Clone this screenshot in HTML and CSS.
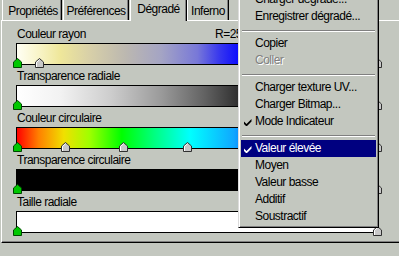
FILE: index.html
```html
<!DOCTYPE html>
<html lang="fr">
<head>
<meta charset="utf-8">
<link rel="stylesheet" href="styles.css">
</head>
<body>
<div class="win">
  <div class="tabs">
    <div class="tab t1">Propriétés</div>
    <div class="tab t2">Préférences</div>
    <div class="tab t3 active">Dégradé</div>
    <div class="tab t4">Inferno</div>
  </div>
  <div class="panel">
    <section class="grad">
      <div class="label"><span class="name">Couleur rayon</span><span class="val">R=255</span></div>
      <div class="bar b1">
        <svg class="mk" style="left:-4px" viewBox="0 0 9 10"><path class="g" d="M0.5 9.5V4L4.5 0.5L8.5 4V9.5Z"/></svg>
        <svg class="mk" style="left:18px" viewBox="0 0 9 10"><path class="s" d="M0.5 9.5V4L4.5 0.5L8.5 4V9.5Z"/><path class="h" d="M1.5 9V4.4L4.5 1.8"/></svg>
        <svg class="mk" style="left:356px" viewBox="0 0 9 10"><path class="s" d="M0.5 9.5V4L4.5 0.5L8.5 4V9.5Z"/><path class="h" d="M1.5 9V4.4L4.5 1.8"/></svg>
      </div>
    </section>
    <section class="grad">
      <div class="label"><span class="name">Transparence radiale</span></div>
      <div class="bar b2">
        <svg class="mk" style="left:-4px" viewBox="0 0 9 10"><path class="g" d="M0.5 9.5V4L4.5 0.5L8.5 4V9.5Z"/></svg>
        <svg class="mk" style="left:356px" viewBox="0 0 9 10"><path class="s" d="M0.5 9.5V4L4.5 0.5L8.5 4V9.5Z"/><path class="h" d="M1.5 9V4.4L4.5 1.8"/></svg>
      </div>
    </section>
    <section class="grad">
      <div class="label"><span class="name">Couleur circulaire</span></div>
      <div class="bar b3">
        <svg class="mk" style="left:-4px" viewBox="0 0 9 10"><path class="g" d="M0.5 9.5V4L4.5 0.5L8.5 4V9.5Z"/></svg>
        <svg class="mk" style="left:44px" viewBox="0 0 9 10"><path class="s" d="M0.5 9.5V4L4.5 0.5L8.5 4V9.5Z"/><path class="h" d="M1.5 9V4.4L4.5 1.8"/></svg>
        <svg class="mk" style="left:102px" viewBox="0 0 9 10"><path class="s" d="M0.5 9.5V4L4.5 0.5L8.5 4V9.5Z"/><path class="h" d="M1.5 9V4.4L4.5 1.8"/></svg>
        <svg class="mk" style="left:166px" viewBox="0 0 9 10"><path class="s" d="M0.5 9.5V4L4.5 0.5L8.5 4V9.5Z"/><path class="h" d="M1.5 9V4.4L4.5 1.8"/></svg>
        <svg class="mk" style="left:356px" viewBox="0 0 9 10"><path class="s" d="M0.5 9.5V4L4.5 0.5L8.5 4V9.5Z"/><path class="h" d="M1.5 9V4.4L4.5 1.8"/></svg>
      </div>
    </section>
    <section class="grad">
      <div class="label"><span class="name">Transparence circulaire</span></div>
      <div class="bar b4">
        <svg class="mk" style="left:-4px" viewBox="0 0 9 10"><path class="g" d="M0.5 9.5V4L4.5 0.5L8.5 4V9.5Z"/></svg>
        <svg class="mk" style="left:356px" viewBox="0 0 9 10"><path class="s" d="M0.5 9.5V4L4.5 0.5L8.5 4V9.5Z"/><path class="h" d="M1.5 9V4.4L4.5 1.8"/></svg>
      </div>
    </section>
    <section class="grad">
      <div class="label"><span class="name">Taille radiale</span></div>
      <div class="bar b5">
        <svg class="mk" style="left:-4px" viewBox="0 0 9 10"><path class="g" d="M0.5 9.5V4L4.5 0.5L8.5 4V9.5Z"/></svg>
        <svg class="mk" style="left:356px" viewBox="0 0 9 10"><path class="s" d="M0.5 9.5V4L4.5 0.5L8.5 4V9.5Z"/><path class="h" d="M1.5 9V4.4L4.5 1.8"/></svg>
      </div>
    </section>
  </div>

  <div class="menu">
    <div class="mi">Charger dégradé...</div>
    <div class="mi">Enregistrer dégradé...</div>
    <div class="sep"></div>
    <div class="mi">Copier</div>
    <div class="mi dis">Coller</div>
    <div class="sep"></div>
    <div class="mi">Charger texture UV...</div>
    <div class="mi">Charger Bitmap...</div>
    <div class="mi chk"><svg class="ck" viewBox="0 0 8 8"><path d="M0 3.5L2.5 6L7.5 1V3.5L2.5 8.5L0 6Z"/></svg>Mode Indicateur</div>
    <div class="sep"></div>
    <div class="mi chk sel"><svg class="ck" viewBox="0 0 8 8"><path d="M0 3.5L2.5 6L7.5 1V3.5L2.5 8.5L0 6Z"/></svg>Valeur élevée</div>
    <div class="mi">Moyen</div>
    <div class="mi">Valeur basse</div>
    <div class="mi">Additif</div>
    <div class="mi">Soustractif</div>
  </div>
</div>
</body>
</html>
```

FILE: styles.css
```css
html, body {
  margin: 0;
  padding: 0;
  background: #c3c7bf;
  overflow: hidden;
}
body {
  width: 399px;
  height: 256px;
  font-family: "Liberation Sans", Arial, sans-serif;
  font-size: 12px;
  letter-spacing: -0.5px;
  color: #000;
}
.win {
  position: relative;
  width: 399px;
  height: 256px;
}

/* tabs */
.tabs {
  display: flex;
  align-items: flex-end;
  height: 20px;
  padding-left: 2px;
}
.tab {
  box-sizing: border-box;
  height: 22px;
  border: 1px solid;
  border-color: #fff #000 transparent #fff;
  border-bottom: none;
  border-radius: 2px 2px 0 0;
  box-shadow: inset -1px 0 #808080;
  padding-top: 5px;
  line-height: 14px;
  text-align: center;
  white-space: nowrap;
  background: #c3c7bf;
}
.t1 { width: 60px; padding-left: 2px; }
.t2 { width: 66px; margin-left: 1px; }
.t3 { width: 57px; margin-left: 1px; }
.t4 { width: 42px; }
.tab.active {
  height: 25px;
  margin-bottom: -1px;
  position: relative;
  z-index: 1;
}

/* panel */
.panel {
  width: 420px;
  margin-left: 1px;
  border-top: 1px solid #fff;
  border-left: 1px solid #fff;
  border-bottom: 1px solid #000;
  box-shadow: inset 0 -1px #808080;
  padding: 6px 0 9px 14px;
}
.grad + .grad { margin-top: 4px; }
.label {
  display: flex;
  line-height: 14px;
  margin-bottom: 2px;
  padding-left: 1px;
  white-space: nowrap;
}
.label .name { width: 198px; }
.bar {
  position: relative;
  box-sizing: border-box;
  width: 363px;
  height: 22px;
  border: 1px solid #000;
}
.b1 {
  background: linear-gradient(to right,
    #fffff4 0%, #f8f4c8 6%, #efe79a 12%, #d8d0a8 20%,
    #bcb8b0 30%, #a4a4c4 40%, #7878d8 50%, #3838ee 56%,
    #0808ff 62%, #0000ff 100%);
}
.b2 {
  background: linear-gradient(to right,
    #ffffff 0%, #f2f2f2 12%, #cdcdcd 26%, #9a9a9a 40%,
    #626262 52%, #2c2c2c 62%, #101010 75%, #000 100%);
}
.b3 {
  background: linear-gradient(to right,
    #ff0000 0%, #ff8000 6%, #f0e000 13%, #a0ff00 20%,
    #00ff00 29%, #00ff80 38%, #00ffff 48%, #10a8ff 60%,
    #0000ff 72%, #ff00ff 86%, #ff0000 100%);
}
.b4 { background: #000; }
.b5 { background: #fff; }

.mk {
  position: absolute;
  top: 14px;
  width: 9px;
  height: 10px;
}
.mk .g { fill: #00c800; stroke: #004800; stroke-width: 1; }
.mk .s { fill: #c8c8c8; stroke: #303030; stroke-width: 1; }
.mk .h { fill: none; stroke: #fff; stroke-width: 1; }

/* popup menu */
.menu {
  position: absolute;
  z-index: 5;
  left: 238px;
  top: -13px;
  width: 141px;
  box-sizing: border-box;
  background: #c3c7bf;
  border: 1px solid;
  border-color: #dcdcdc #000 #000 #dcdcdc;
  box-shadow: inset 1px 1px #fff, inset -1px -1px #808080;
  padding: 3px 2px 2px 2px;
}
.mi {
  display: flex;
  align-items: center;
  height: 17px;
  line-height: 17px;
  padding-left: 14px;
  white-space: nowrap;
}
.mi.chk { padding-left: 3px; }
.ck {
  width: 8px;
  height: 8px;
  margin-right: 3px;
  margin-top: 1px;
  fill: #000;
}
.mi.sel {
  background: #000080;
  color: #fff;
}
.mi.sel .ck { fill: #fff; }
.mi.dis {
  color: #808080;
  text-shadow: 1px 1px 0 #fff;
}
.sep {
  height: 10px;
  box-sizing: border-box;
  padding-top: 5px;
}
.sep::before {
  content: "";
  display: block;
  margin: 0 1px;
  height: 1px;
  background: #808080;
  border-bottom: 1px solid #fff;
}
```
